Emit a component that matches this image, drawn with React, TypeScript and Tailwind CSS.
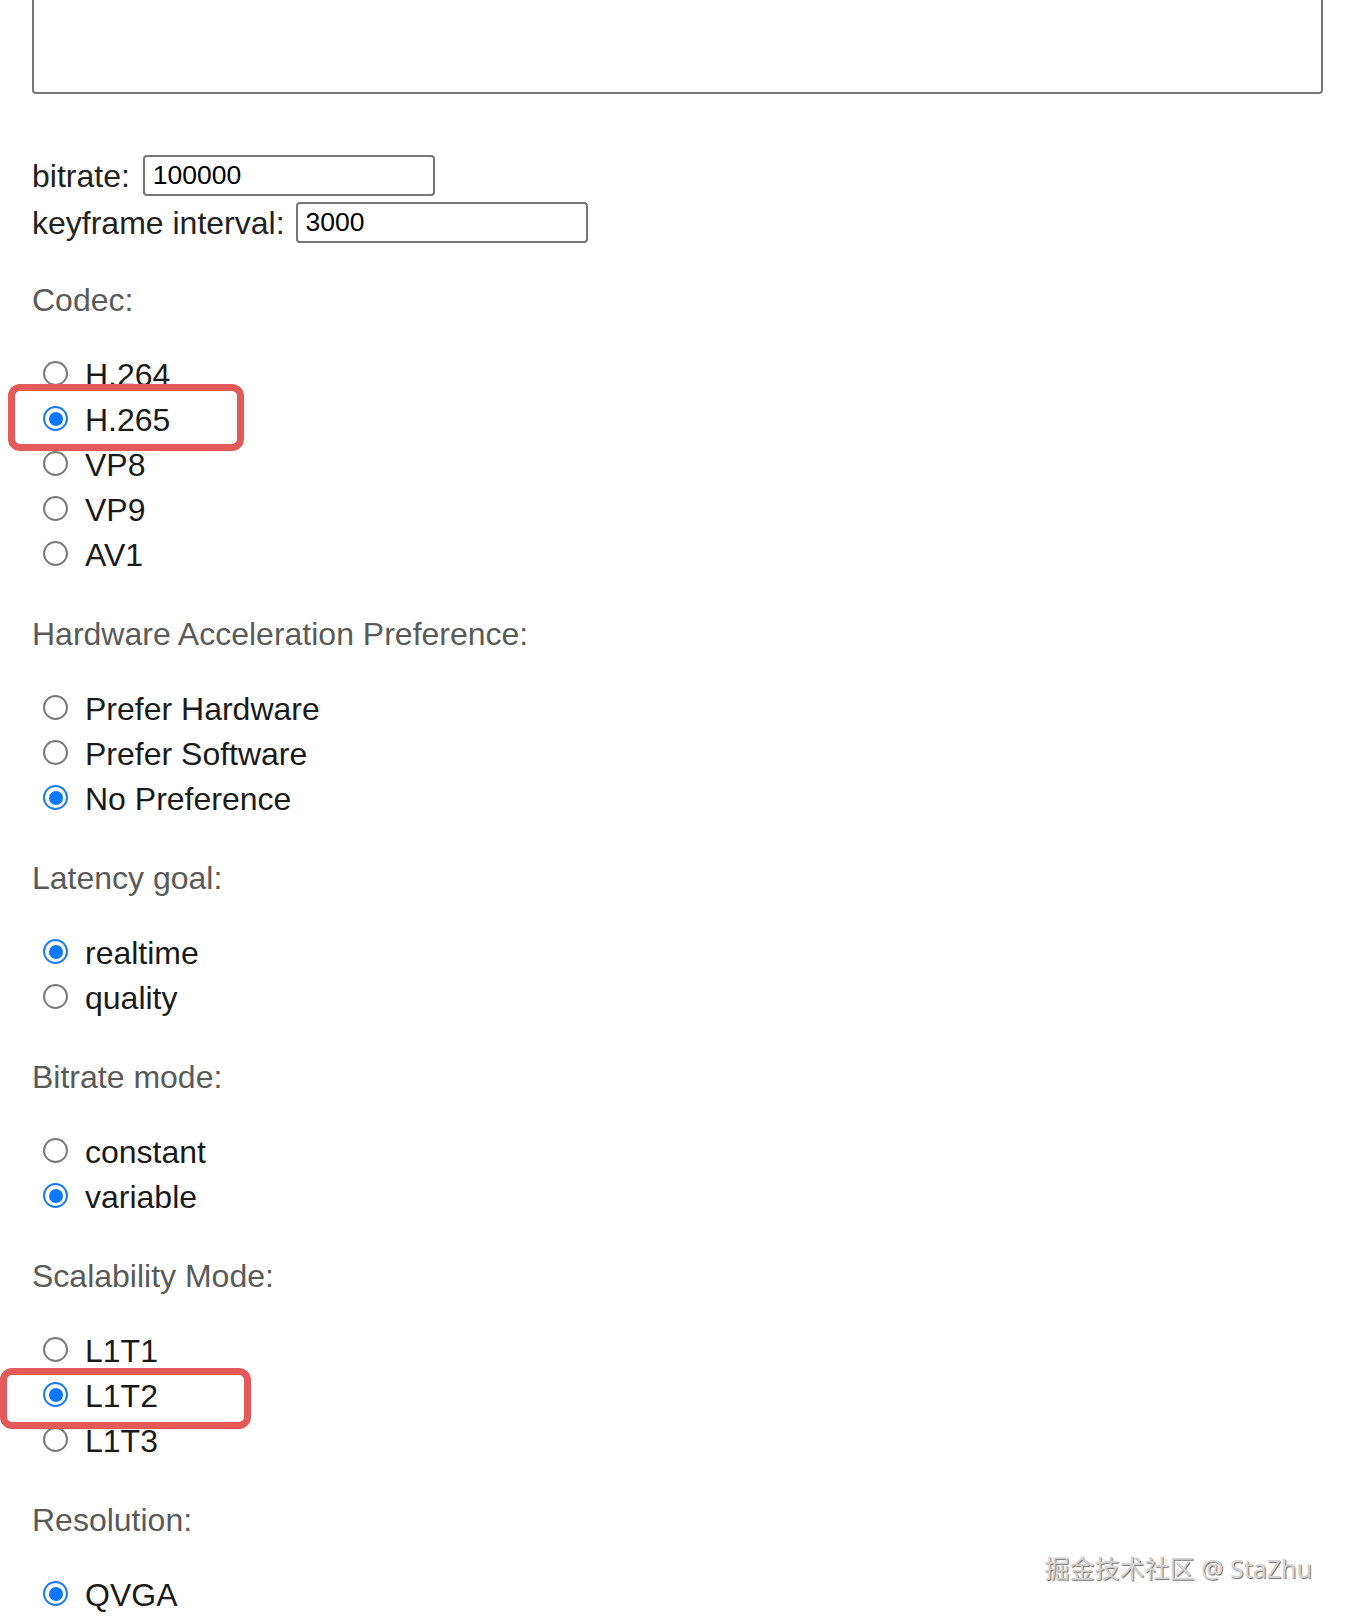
const sections = [
  { title: "Codec:", options: ["H.264", "H.265", "VP8", "VP9", "AV1"], checked: "H.265" },
  {
    title: "Hardware Acceleration Preference:",
    options: ["Prefer Hardware", "Prefer Software", "No Preference"],
    checked: "No Preference",
  },
  { title: "Latency goal:", options: ["realtime", "quality"], checked: "realtime" },
  { title: "Bitrate mode:", options: ["constant", "variable"], checked: "variable" },
  { title: "Scalability Mode:", options: ["L1T1", "L1T2", "L1T3"], checked: "L1T2" },
  { title: "Resolution:", options: ["QVGA"], checked: "QVGA" },
];

function Radio({ checked }: { checked: boolean }) {
  if (checked) {
    return (
      <span className="w-[25px] h-[25px] shrink-0 rounded-full border-2 border-[#1a7cf5] bg-white flex items-center justify-center">
        <span className="w-[14px] h-[14px] rounded-full bg-[#0b78fb]" />
      </span>
    );
  }
  return <span className="w-[25px] h-[25px] shrink-0 rounded-full border-2 border-[#7a7a7a] bg-white" />;
}

export default function App() {
  return (
    <div className="relative w-full h-[1620px] overflow-hidden bg-white font-['Liberation_Sans',Arial,sans-serif]">
      <div className="pl-[32px] pr-[29px]">
        <textarea
          readOnly
          className="block w-full h-[160px] -mt-[66px] border-2 border-[#767676] rounded-[4px] bg-white resize-none"
        />

        <div className="mt-[61px] flex flex-col gap-[6px] text-[32px] text-[#222222] leading-none">
          <div className="flex items-center gap-[13px]">
            <span>bitrate:</span>
            <input
              readOnly
              value="100000"
              className="w-[292px] h-[41px] border-2 border-[#767676] rounded-[4px] px-[8px] text-[26.5px] text-black font-['Liberation_Sans',Arial,sans-serif]"
            />
          </div>
          <div className="flex items-center gap-[11px]">
            <span>keyframe interval:</span>
            <input
              readOnly
              value="3000"
              className="w-[292px] h-[41px] border-2 border-[#767676] rounded-[4px] px-[8px] text-[26.5px] text-black font-['Liberation_Sans',Arial,sans-serif]"
            />
          </div>
        </div>

        {sections.map((s, i) => (
          <div key={s.title} className={i === 0 ? "mt-[38px]" : "mt-[39px]"}>
            <div className="h-[38px] flex items-center text-[32px] leading-none text-[#5a5a5a] mb-[32px]">{s.title}</div>
            {s.options.map((o) => (
              <div key={o} className="h-[45px] flex items-center pl-[11px] gap-[17px]">
                <Radio checked={o === s.checked} />
                <span className="text-[32px] leading-none text-[#1a1a1a] pt-[2px]">{o}</span>
              </div>
            ))}
          </div>
        ))}
      </div>

      {/* annotation boxes */}
      <div className="absolute left-[8px] top-[384px] w-[236px] h-[67px] border-[7px] border-[#e35a59] rounded-[12px]" />
      <div className="absolute left-0 top-[1368px] w-[251px] h-[61px] border-[7px] border-[#e35a59] rounded-[12px]" />

      {/* watermark */}
      <div className="absolute right-[40px] top-[1550px] text-[25px] text-[#d4d4d4] font-['Noto_Sans','Noto_Sans_CJK_SC',sans-serif] [text-shadow:1px_1px_1px_#707070]">
        掘金技术社区 @ StaZhu
      </div>
    </div>
  );
}
